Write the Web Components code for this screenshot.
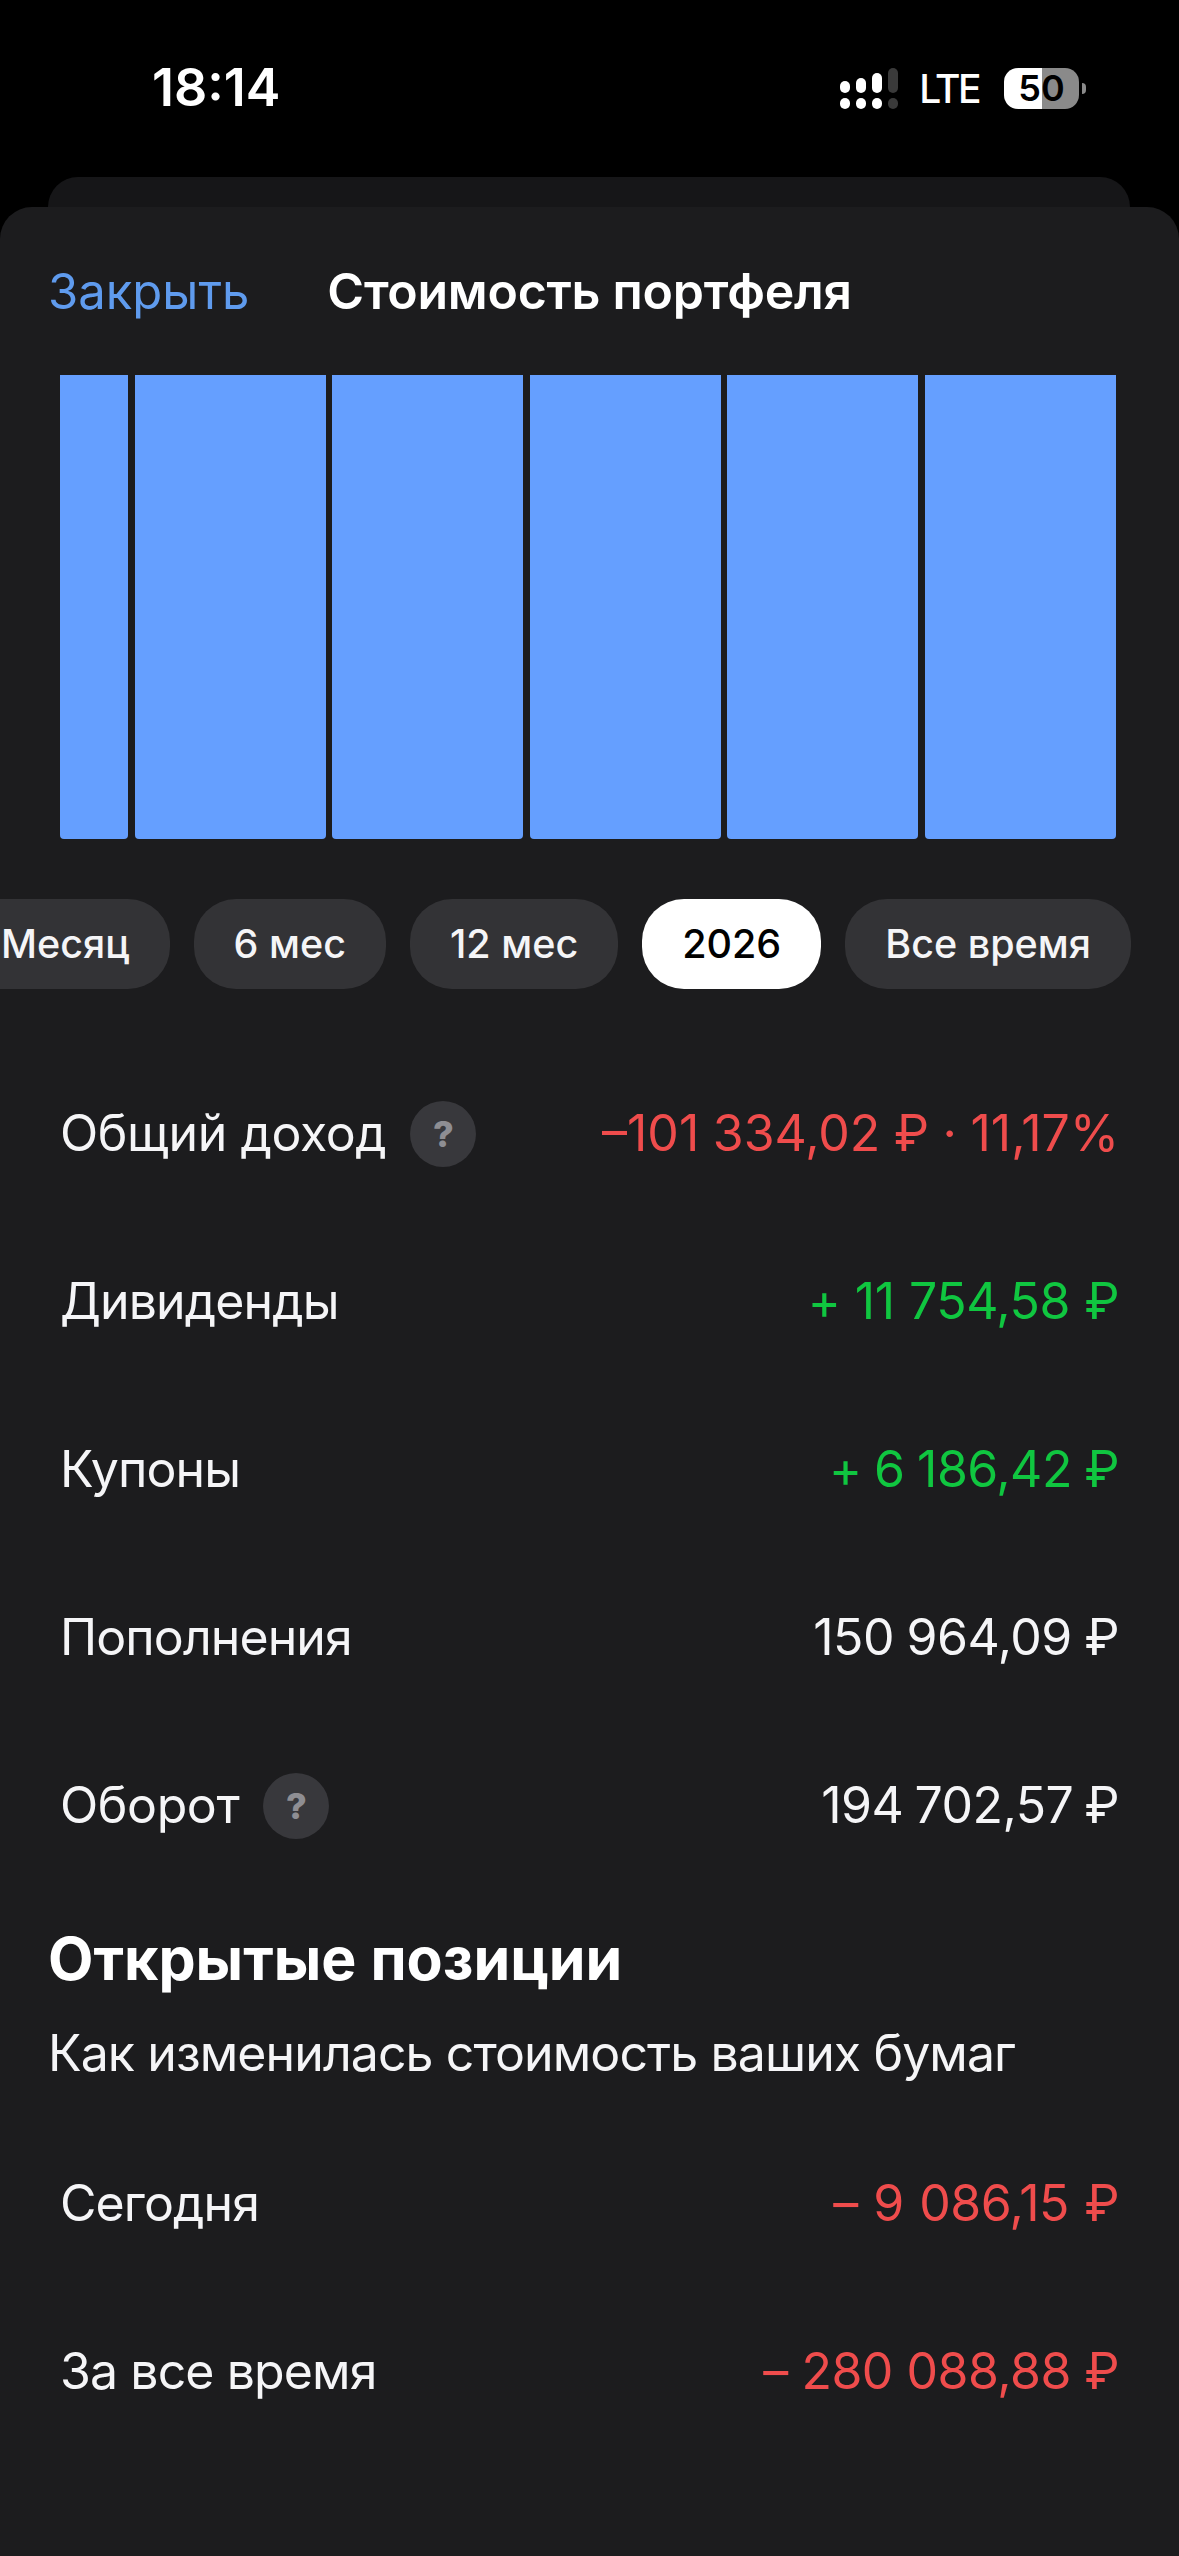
<!DOCTYPE html>
<html lang="ru">
<head>
<meta charset="utf-8">
<title>Стоимость портфеля</title>
<style>
  html, body { margin: 0; padding: 0; background: #000; }
  body { font-family: Inter, "Noto Sans", "Liberation Sans", sans-serif; color: #f5f5f7; }
  portfolio-sheet { height: 2349px; }
</style>
</head>
<body>
<status-bar></status-bar>
<peek-card></peek-card>
<portfolio-sheet>
  <sheet-header slot="header" action="Закрыть">Стоимость портфеля</sheet-header>
  <bar-chart></bar-chart>
  <range-pills>
    <range-pill>Месяц</range-pill>
    <range-pill>6 мес</range-pill>
    <range-pill>12 мес</range-pill>
    <range-pill active>2026</range-pill>
    <range-pill>Все время</range-pill>
  </range-pills>
  <stat-list>
    <stat-row label="Общий доход" value="–101 334,02 ₽ · 11,17%" tone="red" help style="--value-spacing: 0; --value-words: -0.5px"></stat-row>
    <stat-row label="Дивиденды" value="+ 11 754,58 ₽" tone="green" style="--value-words: 1px"></stat-row>
    <stat-row label="Купоны" value="+ 6 186,42 ₽" tone="green"></stat-row>
    <stat-row label="Пополнения" value="150 964,09 ₽"></stat-row>
    <stat-row label="Оборот" value="194 702,57 ₽" help style="--value-words: -2.5px"></stat-row>
  </stat-list>
  <section-heading sub="Как изменилась стоимость ваших бумаг">Открытые позиции</section-heading>
  <stat-list>
    <stat-row label="Сегодня" value="– 9 086,15 ₽" tone="red" style="--value-words: 2px"></stat-row>
    <stat-row label="За все время" value="– 280 088,88 ₽" tone="red" style="--value-words: 0"></stat-row>
  </stat-list>
</portfolio-sheet>

<script>
class StatusBar extends HTMLElement {
  constructor() {
    super();
    this.attachShadow({mode: 'open'}).innerHTML = `
      <style>
        :host { display: flex; align-items: center; height: 177px; padding: 0 93px 0 152px; box-sizing: border-box; background: #000; color: #fff; }
        .bar { display: flex; align-items: center; justify-content: space-between; width: 100%; margin-top: -1px; }
        .time { font-size: 52px; font-weight: 600; line-height: 1; }
        .icons { display: flex; align-items: center; }
        svg { display: block; margin-right: 21px; }
        .lte { font-size: 39px; font-weight: 500; line-height: 1; margin-right: 25px; letter-spacing: -2.5px; }
        .battery { display: flex; align-items: center; justify-content: center; width: 75px; height: 41px; border-radius: 14px; font-size: 36px; font-weight: 600; color: #000; background: linear-gradient(90deg, #fff 0 38px, #8a8a8a 38px); }
        .nub { width: 4px; height: 11px; margin-left: 3px; border-radius: 0 6px 6px 0; background: #8a8a8a; }
      </style>
      <div class="bar">
        <span class="time">18:14</span>
        <div class="icons">
          <svg width="58" height="41" viewBox="0 0 58 41">
            <g fill="#fff">
              <rect x="0" y="13" width="10" height="12" rx="5"/>
              <rect x="16" y="10" width="10" height="15" rx="5"/>
              <rect x="32" y="5" width="10" height="20" rx="5"/>
              <rect x="0" y="30" width="10" height="11" rx="5"/>
              <rect x="16" y="30" width="10" height="11" rx="5"/>
              <rect x="32" y="30" width="10" height="11" rx="5"/>
            </g>
            <g fill="#3a3a3a">
              <rect x="48" y="0" width="10" height="25" rx="5"/>
              <rect x="48" y="30" width="10" height="11" rx="5"/>
            </g>
          </svg>
          <span class="lte">LTE</span>
          <span class="battery">50</span>
          <span class="nub"></span>
        </div>
      </div>
    `;
  }
}

class PeekCard extends HTMLElement {
  constructor() {
    super();
    this.attachShadow({mode: 'open'}).innerHTML = `
      <style>
        :host { display: block; height: 30px; margin: 0 49px 0 48px; background: #161618; border-radius: 30px 30px 0 0; }
      </style>
    `;
  }
}

class PortfolioSheet extends HTMLElement {
  constructor() {
    super();
    this.attachShadow({mode: 'open'}).innerHTML = `
      <style>
        :host { display: block; background: #1c1c1e; border-radius: 32px 32px 0 0; overflow: hidden; }
      </style>
      <slot name="header"></slot>
      <slot></slot>
    `;
  }
}

class SheetHeader extends HTMLElement {
  constructor() {
    super();
    this.attachShadow({mode: 'open'}).innerHTML = `
      <style>
        :host { display: grid; grid-template-columns: 1fr auto 1fr; align-items: center; height: 168px; padding: 0 48px; box-sizing: border-box; }
        .action { color: #5f9bee; font-size: 49px; }
        .title { color: #fff; font-size: 50px; font-weight: 600; letter-spacing: -0.25px; }
      </style>
      <span class="action"></span>
      <span class="title"><slot></slot></span>
      <span></span>
    `;
  }
  connectedCallback() {
    this.shadowRoot.querySelector('.action').textContent = this.getAttribute('action');
  }
}

class BarChart extends HTMLElement {
  constructor() {
    super();
    this.attachShadow({mode: 'open'}).innerHTML = `
      <style>
        :host { display: flex; gap: 6.5px; height: 464px; margin: 0 63px 0 60px; }
        div { flex: 191 1 0; background: #659fff; border-radius: 0 0 4px 4px; }
        div:first-of-type { flex: 68 1 0; }
      </style>
      <div></div><div></div><div></div><div></div><div></div><div></div>
    `;
  }
}

class RangePills extends HTMLElement {
  constructor() {
    super();
    this.attachShadow({mode: 'open'}).innerHTML = `
      <style>
        :host { display: flex; justify-content: flex-end; gap: 24px; margin-top: 60px; padding-right: 48px; overflow: hidden; }
      </style>
      <slot></slot>
    `;
  }
}

class RangePill extends HTMLElement {
  constructor() {
    super();
    this.attachShadow({mode: 'open'}).innerHTML = `
      <style>
        :host { display: flex; flex: none; align-items: center; height: 90px; padding: 0 40px; border-radius: 42px; background: #333336; color: #f5f5f7; font-size: 39.5px; font-weight: 500; white-space: nowrap; }
        :host([active]) { background: #fff; color: #000; }
      </style>
      <slot></slot>
    `;
  }
}

class StatList extends HTMLElement {
  constructor() {
    super();
    this.attachShadow({mode: 'open'}).innerHTML = `
      <style>
        :host { display: block; padding: 0 60px; }
        :host(:first-of-type) { margin-top: 61px; }
      </style>
      <slot></slot>
    `;
  }
}

class StatRow extends HTMLElement {
  constructor() {
    super();
    this.attachShadow({mode: 'open'}).innerHTML = `
      <style>
        :host { display: flex; align-items: center; justify-content: space-between; height: 168px; font-size: 50px; white-space: nowrap; }
        .label { display: flex; align-items: center; gap: 24px; letter-spacing: -0.9px; }
        :host([help]) .label { letter-spacing: -0.4px; }
        .value { margin-top: -2px; letter-spacing: var(--value-spacing, -0.5px); word-spacing: var(--value-words, -1px); }
        .text { margin-top: -2px; }
        :host([tone="red"]) .value { color: #ef4c4c; }
        :host([tone="green"]) .value { color: #10c640; }
        .help { display: none; align-items: center; justify-content: center; width: 66px; height: 66px; border-radius: 50%; background: #38383c; color: #8e8e93; font-size: 36px; font-weight: 800; }
        :host([help]) .help { display: flex; }
      </style>
      <span class="label"><span class="text"></span><span class="help">?</span></span>
      <span class="value"></span>
    `;
  }
  connectedCallback() {
    this.shadowRoot.querySelector('.text').textContent = this.getAttribute('label');
    this.shadowRoot.querySelector('.value').textContent = this.getAttribute('value');
  }
}

class SectionHeading extends HTMLElement {
  constructor() {
    super();
    this.attachShadow({mode: 'open'}).innerHTML = `
      <style>
        :host { display: block; height: 230px; padding: 36px 48px 0; box-sizing: border-box; }
        .title { color: #fff; font-size: 59px; font-weight: 700; line-height: 66px; }
        .sub { margin-top: 32px; font-size: 50px; line-height: 58px; letter-spacing: -0.9px; white-space: nowrap; }
      </style>
      <div class="title"><slot></slot></div>
      <div class="sub"></div>
    `;
  }
  connectedCallback() {
    this.shadowRoot.querySelector('.sub').textContent = this.getAttribute('sub');
  }
}

customElements.define('status-bar', StatusBar);
customElements.define('peek-card', PeekCard);
customElements.define('portfolio-sheet', PortfolioSheet);
customElements.define('sheet-header', SheetHeader);
customElements.define('bar-chart', BarChart);
customElements.define('range-pills', RangePills);
customElements.define('range-pill', RangePill);
customElements.define('stat-list', StatList);
customElements.define('stat-row', StatRow);
customElements.define('section-heading', SectionHeading);
</script>
</body>
</html>
